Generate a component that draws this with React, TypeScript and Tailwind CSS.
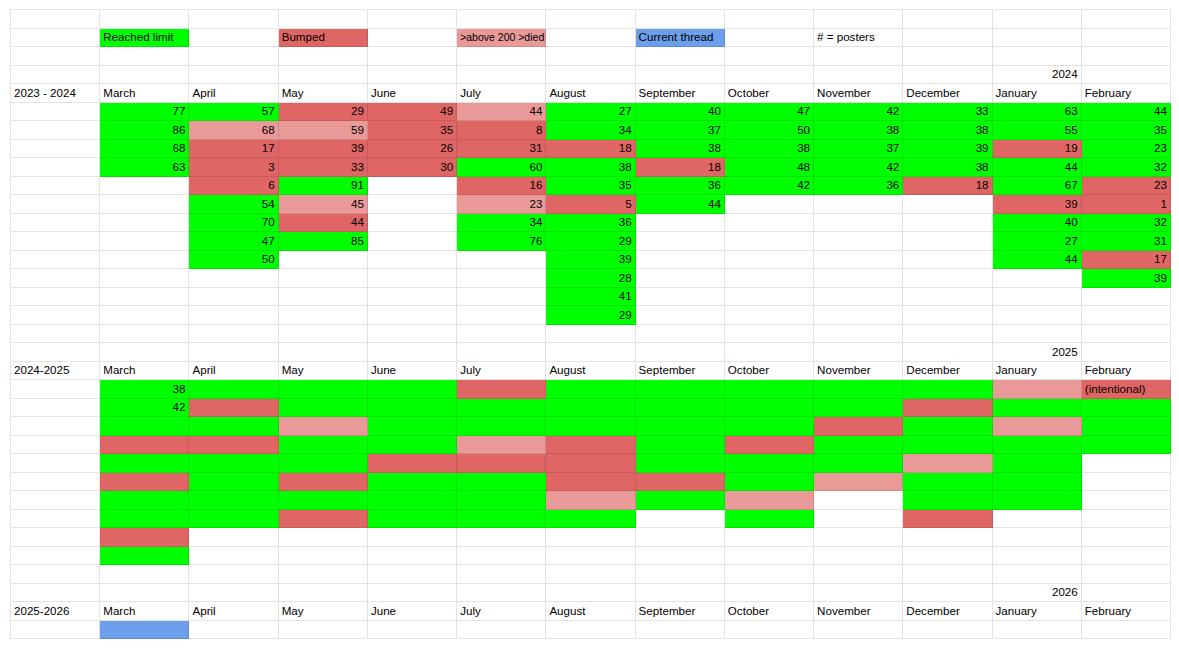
type Fill = 'G' | 'R' | 'L' | 'B' | ''

type Cell = { text?: string; fill?: Fill; right?: boolean; small?: boolean }

const fillClass: Record<Fill, string> = {
  G: 'bg-[#00ff00]',
  R: 'bg-[#e06666]',
  L: 'bg-[#ea9999]',
  B: 'bg-[#6d9eeb]',
  '': '',
}

const MONTHS = ['March', 'April', 'May', 'June', 'July', 'August', 'September', 'October', 'November', 'December', 'January', 'February']

const ROWS = 34
const COLS = 13

// 2023 - 2024, number + colour code per cell
const season1: string[][] = [
  ['77G', '86G', '68G', '63G'],
  ['57G', '68L', '17R', '3R', '6R', '54G', '70G', '47G', '50G'],
  ['29R', '59L', '39R', '33R', '91G', '45L', '44R', '85G'],
  ['49R', '35R', '26R', '30R'],
  ['44L', '8R', '31R', '60G', '16R', '23L', '34G', '76G'],
  ['27G', '34G', '18R', '38G', '35G', '5R', '36G', '29G', '39G', '28G', '41G', '29G'],
  ['40G', '37G', '38G', '18R', '36G', '44G'],
  ['47G', '50G', '38G', '48G', '42G'],
  ['42G', '38G', '37G', '42G', '36G'],
  ['33G', '38G', '39G', '38G', '18R'],
  ['63G', '55G', '19R', '44G', '67G', '39R', '40G', '27G', '44G'],
  ['44G', '35G', '23G', '32G', '23R', '1R', '32G', '31G', '17R', '39G'],
]

// 2024-2025, colours only
const season2: string[] = [
  'GGGRGRGGRG',
  'GRGRGGGG',
  'GGLGGRGR',
  'GGGGRGGG',
  'RGGLRGGG',
  'GGGRRRLG',
  'GGGGGRG',
  'GGGRGGLG',
  'GGRGGL',
  'GRGGLGGR',
  'LGLGGGG',
  'RGGG',
]

function buildGrid(): Cell[][] {
  const g: Cell[][] = Array.from({ length: ROWS }, () => Array.from({ length: COLS }, () => ({})))

  // legend
  g[1][1] = { text: 'Reached limit', fill: 'G' }
  g[1][3] = { text: 'Bumped', fill: 'R' }
  g[1][5] = { text: '>above 200 >died', fill: 'L', small: true }
  g[1][7] = { text: 'Current thread', fill: 'B' }
  g[1][9] = { text: '# = posters' }

  const header = (row: number, label: string, year: string) => {
    g[row - 1][11] = { text: year, right: true }
    g[row][0] = { text: label }
    MONTHS.forEach((m, i) => (g[row][i + 1] = { text: m }))
  }

  header(4, '2023 - 2024', '2024')
  season1.forEach((col, c) =>
    col.forEach((v, r) => {
      g[5 + r][c + 1] = { text: v.slice(0, -1), fill: v.slice(-1) as Fill, right: true }
    }),
  )

  header(19, '2024-2025', '2025')
  season2.forEach((col, c) =>
    col.split('').forEach((f, r) => {
      g[20 + r][c + 1] = { fill: f as Fill }
    }),
  )
  g[20][1] = { text: '38', fill: 'G', right: true }
  g[21][1] = { text: '42', fill: 'G', right: true }
  g[20][12] = { text: '(intentional)', fill: 'R' }

  header(32, '2025-2026', '2026')
  g[33][1] = { fill: 'B' }

  return g
}

export default function App() {
  const grid = buildGrid()

  return (
    <div className="min-h-screen bg-white pt-[9px] pl-[10px] font-['Liberation_Sans',Arial,sans-serif] text-black">
      <div className="grid w-[1161px] grid-cols-[repeat(13,minmax(0,1fr))] border-t border-l border-[#0000001c]">
        {grid.flatMap((row, r) =>
          row.map((cell, c) => (
            <div
              key={`${r}-${c}`}
              className={`flex h-[18.5px] items-end overflow-hidden whitespace-nowrap border-r border-b border-[#0000001c] px-[3px] pb-[2px] ${
                cell.right ? 'justify-end' : 'justify-start'
              } ${fillClass[cell.fill ?? '']}`}
            >
              {cell.text && (
                <span className={cell.small ? 'text-[10.5px] leading-[14px]' : 'text-[11.6px] leading-[15px]'}>
                  {cell.text}
                </span>
              )}
            </div>
          )),
        )}
      </div>
    </div>
  )
}
